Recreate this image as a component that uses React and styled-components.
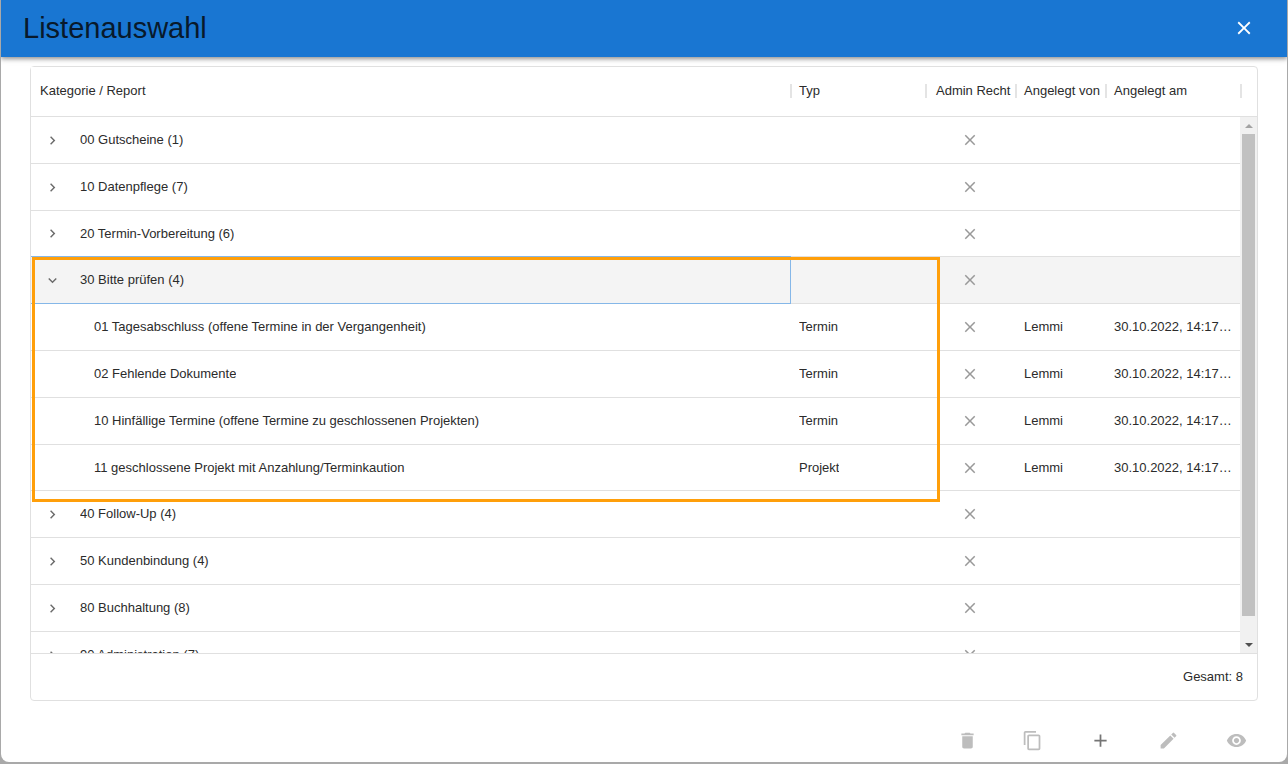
import { useState } from 'react';
import styled, { createGlobalStyle } from 'styled-components';
import {
    MdAdd,
    MdChevronRight,
    MdClose,
    MdContentCopy,
    MdDelete,
    MdEdit,
    MdExpandMore,
    MdVisibility,
} from 'react-icons/md';

const GlobalStyle = createGlobalStyle`
    * {
        box-sizing: border-box;
    }
    body {
        margin: 0;
        background: #a9a9a9;
        color: #2b2b2b;
        font-family: "Liberation Sans", Arial, sans-serif;
        font-size: 13px;
        line-height: 20px;
    }
`;

export const Dialog = styled.main`
    display: flex;
    flex-direction: column;
    height: calc(100vh - 2px);
    margin: 0 1px 2px;
    overflow: hidden;
    background: #fff;
    border-radius: 0 0 8px 8px;
`;

export const TitleBar = styled.header`
    display: flex;
    align-items: center;
    justify-content: space-between;
    flex: none;
    height: 57px;
    padding: 0 25px 2px 22px;
    background: #1976d2;
    box-shadow: 0 2px 4px rgba(0, 0, 0, 0.35), 0 1px 8px rgba(0, 0, 0, 0.12);
`;

export const Title = styled.h1`
    margin: 0;
    color: #08192b;
    font-size: 29px;
    font-weight: normal;
    line-height: 36px;
`;

export const IconButton = styled.button`
    display: flex;
    align-items: center;
    justify-content: center;
    width: 36px;
    height: 36px;
    padding: 0;
    border: 0;
    background: none;
    color: ${({ $color }) => $color || '#bdbdbd'};
    font-size: 21px;
`;

export const CloseButton = styled(IconButton)`
    font-size: 22px;
`;

export const Grid = styled.section`
    display: flex;
    flex-direction: column;
    flex: 1;
    min-height: 0;
    margin: 9px 29px 0;
    border: 1px solid #e0e0e0;
    border-radius: 4px;
`;

export const TableArea = styled.div`
    display: grid;
    grid-template-columns: 1fr 17px;
    grid-template-rows: 50px 1fr;
    flex: 1;
    min-height: 0;
`;

export const Table = styled.table`
    display: flex;
    flex-direction: column;
    grid-column: 1;
    grid-row: 1 / 3;
    min-height: 0;
`;

export const TableHead = styled.thead`
    display: block;
    flex: none;
`;

export const TableBody = styled.tbody`
    display: block;
    position: relative;
    flex: 1;
    min-height: 0;
    overflow: hidden;
`;

export const Row = styled.tr`
    display: grid;
    grid-template-columns: 1fr 135px 90px 90px 135px;
    height: 47px;
    background: ${({ $active }) => ($active ? '#f4f4f4' : '#fff')};
    border-bottom: 1px solid #e0e0e0;

    tbody > &:nth-child(5n + 3) {
        height: 46px;
    }
`;

export const HeadRow = styled(Row)`
    height: 50px;
`;

export const HeadCell = styled.th`
    position: relative;
    display: flex;
    align-items: center;
    padding: 0 0 2px 9px;
    font-weight: normal;
    white-space: nowrap;
`;

export const CenteredHeadCell = styled(HeadCell)`
    padding-left: 11px;
`;

export const Separator = styled.span`
    position: absolute;
    top: 17px;
    right: -2px;
    width: 2px;
    height: 14px;
    background: #e4e4e4;
`;

export const Cell = styled.td`
    display: flex;
    align-items: center;
    justify-content: ${({ $center }) => ($center ? 'center' : 'flex-start')};
    min-width: 0;
    padding: ${({ $center }) => ($center ? '0' : '0 4px 0 9px')};
    color: ${({ $center }) => ($center ? '#999' : 'inherit')};
    font-size: ${({ $center }) => ($center ? '18px' : '13px')};
`;

export const NameCell = styled(Cell)`
    position: relative;
    z-index: ${({ $focused }) => ($focused ? 1 : 0)};
    padding-left: ${({ $child }) => ($child ? '63px' : '10px')};
    outline: ${({ $focused }) => ($focused ? '1px solid #85b7e8' : 'none')};
`;

export const CellText = styled.span`
    overflow: hidden;
    text-overflow: ellipsis;
    white-space: nowrap;
`;

export const Toggle = styled.button`
    display: flex;
    align-items: center;
    justify-content: center;
    width: 22px;
    height: 22px;
    margin-right: 17px;
    padding: 0;
    border: 0;
    background: none;
    color: #6b6b6b;
    font-size: 17px;
`;

// frame drawn on top of the rows of the opened category
export const Marker = styled.tr`
    position: absolute;
    z-index: 2;
    top: 140px;
    left: 1px;
    right: 300px;
    height: 245px;
    border: 3px solid #ff9f0a;
    pointer-events: none;
`;

export const ScrollBar = styled.div`
    display: flex;
    flex-direction: column;
    align-items: center;
    grid-column: 2;
    grid-row: 2;
    background: #f1f1f1;
`;

export const HeadFill = styled.div`
    grid-column: 2;
    grid-row: 1;
    border-bottom: 1px solid #e0e0e0;
`;

export const ScrollArrow = styled.span`
    display: flex;
    align-items: center;
    justify-content: center;
    width: 17px;
    height: 17px;

    &::before {
        content: '';
        border: 4px solid transparent;
        border-top-width: ${({ $up }) => ($up ? '0' : '4px')};
        border-bottom-width: ${({ $up }) => ($up ? '4px' : '0')};
        border-top-color: #505050;
        border-bottom-color: #a3a3a3;
    }
`;

export const ScrollTrack = styled.div`
    flex: 1;
    width: 13px;
`;

export const ScrollThumb = styled.div`
    height: 96%;
    background: #c1c1c1;
`;

export const GridFooter = styled.footer`
    display: flex;
    align-items: center;
    justify-content: flex-end;
    flex: none;
    height: 47px;
    padding: 0 14px 0;
    border-top: 1px solid #e0e0e0;
`;

export const Actions = styled.div`
    display: flex;
    justify-content: flex-end;
    flex: none;
    gap: 32px;
    padding: 21px 33px 4px;
`;

export const ActionGroup = styled.div`
    display: flex;
    gap: 29px;
`;

const CREATED_AT = '30.10.2022, 14:17…';

const CATEGORIES = [
    { name: '00 Gutscheine', count: 1 },
    { name: '10 Datenpflege', count: 7 },
    { name: '20 Termin-Vorbereitung', count: 6 },
    {
        name: '30 Bitte prüfen',
        count: 4,
        reports: [
            { name: '01 Tagesabschluss (offene Termine in der Vergangenheit)', type: 'Termin' },
            { name: '02 Fehlende Dokumente', type: 'Termin' },
            { name: '10 Hinfällige Termine (offene Termine zu geschlossenen Projekten)', type: 'Termin' },
            { name: '11 geschlossene Projekt mit Anzahlung/Terminkaution', type: 'Projekt' },
        ],
    },
    { name: '40 Follow-Up', count: 4 },
    { name: '50 Kundenbindung', count: 4 },
    { name: '80 Buchhaltung', count: 8 },
    { name: '90 Administration', count: 7 },
];

const CategoryRow = ({ category, open, onToggle }) => (
    <Row $active={open}>
        <NameCell $focused={open}>
            <Toggle aria-label={category.name} aria-expanded={open} onClick={onToggle}>
                {open ? <MdExpandMore /> : <MdChevronRight />}
            </Toggle>
            <CellText>{category.name} ({category.count})</CellText>
        </NameCell>
        <Cell />
        <Cell $center><MdClose /></Cell>
        <Cell />
        <Cell />
    </Row>
);

const ReportRow = ({ report }) => (
    <Row>
        <NameCell $child><CellText>{report.name}</CellText></NameCell>
        <Cell><CellText>{report.type}</CellText></Cell>
        <Cell $center><MdClose /></Cell>
        <Cell><CellText>Lemmi</CellText></Cell>
        <Cell><CellText>{CREATED_AT}</CellText></Cell>
    </Row>
);

export default function App() {
    const [openName, setOpenName] = useState('30 Bitte prüfen');

    const toggle = (name) => setOpenName(openName === name ? null : name);

    return (
        <>
            <GlobalStyle />
            <Dialog>
                <TitleBar>
                    <Title>Listenauswahl</Title>
                    <CloseButton $color="#fff" aria-label="Schließen"><MdClose /></CloseButton>
                </TitleBar>
                <Grid>
                    <TableArea>
                        <Table>
                            <TableHead>
                                <HeadRow>
                                    <HeadCell>Kategorie / Report<Separator /></HeadCell>
                                    <HeadCell>Typ<Separator /></HeadCell>
                                    <CenteredHeadCell>Admin Recht<Separator /></CenteredHeadCell>
                                    <HeadCell>Angelegt von<Separator /></HeadCell>
                                    <HeadCell>Angelegt am<Separator /></HeadCell>
                                </HeadRow>
                            </TableHead>
                            <TableBody>
                                {CATEGORIES.flatMap((category) => {
                                    const open = category.name === openName;
                                    const reports = open && category.reports ? category.reports : [];
                                    return [
                                        <CategoryRow
                                            key={category.name}
                                            category={category}
                                            open={open}
                                            onToggle={() => toggle(category.name)}
                                        />,
                                        ...reports.map((report) => (
                                            <ReportRow key={report.name} report={report} />
                                        )),
                                    ];
                                })}
                                {openName === '30 Bitte prüfen' && <Marker aria-hidden="true" />}
                            </TableBody>
                        </Table>
                        <HeadFill />
                        <ScrollBar aria-hidden="true">
                            <ScrollArrow $up />
                            <ScrollTrack><ScrollThumb /></ScrollTrack>
                            <ScrollArrow />
                        </ScrollBar>
                    </TableArea>
                    <GridFooter>Gesamt: 8</GridFooter>
                </Grid>
                <Actions>
                    <ActionGroup>
                        <IconButton aria-label="Löschen"><MdDelete /></IconButton>
                        <IconButton aria-label="Kopieren"><MdContentCopy /></IconButton>
                    </ActionGroup>
                    <IconButton $color="#757575" aria-label="Neu"><MdAdd /></IconButton>
                    <IconButton aria-label="Bearbeiten"><MdEdit /></IconButton>
                    <IconButton aria-label="Anzeigen"><MdVisibility /></IconButton>
                </Actions>
            </Dialog>
        </>
    );
}
